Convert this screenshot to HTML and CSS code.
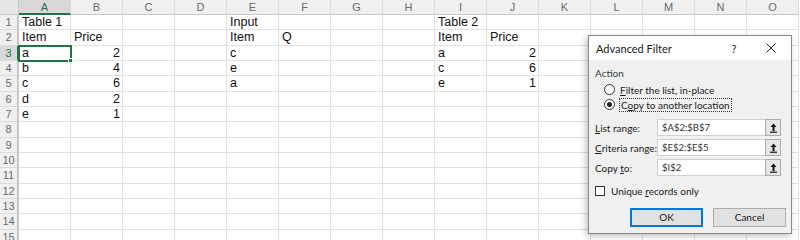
FILE: index.html
```html
<!DOCTYPE html>
<html>
<head>
<meta charset="utf-8">
<link rel="stylesheet" href="styles.css">
</head>
<body>
<div class="sheet">
  <div class="corner"></div><div class="ch sel">A</div><div class="ch">B</div><div class="ch">C</div><div class="ch">D</div><div class="ch">E</div><div class="ch">F</div><div class="ch">G</div><div class="ch">H</div><div class="ch">I</div><div class="ch">J</div><div class="ch">K</div><div class="ch">L</div><div class="ch">M</div><div class="ch">N</div><div class="ch">O</div>

  <div class="rh">1</div><div class="c">Table 1</div><div class="c"></div><div class="c"></div><div class="c"></div><div class="c">Input</div><div class="c"></div><div class="c"></div><div class="c"></div><div class="c">Table 2</div><div class="c"></div><div class="c"></div><div class="c"></div><div class="c"></div><div class="c"></div><div class="c"></div>

  <div class="rh">2</div><div class="c">Item</div><div class="c">Price</div><div class="c"></div><div class="c"></div><div class="c">Item</div><div class="c">Q</div><div class="c"></div><div class="c"></div><div class="c">Item</div><div class="c">Price</div><div class="c"></div><div class="c"></div><div class="c"></div><div class="c"></div><div class="c"></div>

  <div class="rh sel">3</div><div class="c active">a<span class="handle"></span></div><div class="c n">2</div><div class="c"></div><div class="c"></div><div class="c">c</div><div class="c"></div><div class="c"></div><div class="c"></div><div class="c">a</div><div class="c n">2</div><div class="c"></div><div class="c"></div><div class="c"></div><div class="c"></div><div class="c"></div>

  <div class="rh">4</div><div class="c">b</div><div class="c n">4</div><div class="c"></div><div class="c"></div><div class="c">e</div><div class="c"></div><div class="c"></div><div class="c"></div><div class="c">c</div><div class="c n">6</div><div class="c"></div><div class="c"></div><div class="c"></div><div class="c"></div><div class="c"></div>

  <div class="rh">5</div><div class="c">c</div><div class="c n">6</div><div class="c"></div><div class="c"></div><div class="c">a</div><div class="c"></div><div class="c"></div><div class="c"></div><div class="c">e</div><div class="c n">1</div><div class="c"></div><div class="c"></div><div class="c"></div><div class="c"></div><div class="c"></div>

  <div class="rh">6</div><div class="c">d</div><div class="c n">2</div><div class="c"></div><div class="c"></div><div class="c"></div><div class="c"></div><div class="c"></div><div class="c"></div><div class="c"></div><div class="c"></div><div class="c"></div><div class="c"></div><div class="c"></div><div class="c"></div><div class="c"></div>

  <div class="rh">7</div><div class="c">e</div><div class="c n">1</div><div class="c"></div><div class="c"></div><div class="c"></div><div class="c"></div><div class="c"></div><div class="c"></div><div class="c"></div><div class="c"></div><div class="c"></div><div class="c"></div><div class="c"></div><div class="c"></div><div class="c"></div>

  <div class="rh">8</div><div class="c"></div><div class="c"></div><div class="c"></div><div class="c"></div><div class="c"></div><div class="c"></div><div class="c"></div><div class="c"></div><div class="c"></div><div class="c"></div><div class="c"></div><div class="c"></div><div class="c"></div><div class="c"></div><div class="c"></div>

  <div class="rh">9</div><div class="c"></div><div class="c"></div><div class="c"></div><div class="c"></div><div class="c"></div><div class="c"></div><div class="c"></div><div class="c"></div><div class="c"></div><div class="c"></div><div class="c"></div><div class="c"></div><div class="c"></div><div class="c"></div><div class="c"></div>

  <div class="rh">10</div><div class="c"></div><div class="c"></div><div class="c"></div><div class="c"></div><div class="c"></div><div class="c"></div><div class="c"></div><div class="c"></div><div class="c"></div><div class="c"></div><div class="c"></div><div class="c"></div><div class="c"></div><div class="c"></div><div class="c"></div>

  <div class="rh">11</div><div class="c"></div><div class="c"></div><div class="c"></div><div class="c"></div><div class="c"></div><div class="c"></div><div class="c"></div><div class="c"></div><div class="c"></div><div class="c"></div><div class="c"></div><div class="c"></div><div class="c"></div><div class="c"></div><div class="c"></div>

  <div class="rh">12</div><div class="c"></div><div class="c"></div><div class="c"></div><div class="c"></div><div class="c"></div><div class="c"></div><div class="c"></div><div class="c"></div><div class="c"></div><div class="c"></div><div class="c"></div><div class="c"></div><div class="c"></div><div class="c"></div><div class="c"></div>

  <div class="rh">13</div><div class="c"></div><div class="c"></div><div class="c"></div><div class="c"></div><div class="c"></div><div class="c"></div><div class="c"></div><div class="c"></div><div class="c"></div><div class="c"></div><div class="c"></div><div class="c"></div><div class="c"></div><div class="c"></div><div class="c"></div>

  <div class="rh">14</div><div class="c"></div><div class="c"></div><div class="c"></div><div class="c"></div><div class="c"></div><div class="c"></div><div class="c"></div><div class="c"></div><div class="c"></div><div class="c"></div><div class="c"></div><div class="c"></div><div class="c"></div><div class="c"></div><div class="c"></div>

  <div class="rh">15</div><div class="c"></div><div class="c"></div><div class="c"></div><div class="c"></div><div class="c"></div><div class="c"></div><div class="c"></div><div class="c"></div><div class="c"></div><div class="c"></div><div class="c"></div><div class="c"></div><div class="c"></div><div class="c"></div><div class="c"></div>
</div>

<div class="dialog">
  <div class="titlebar">
    <span class="title">Advanced Filter</span>
    <span class="help">?</span>
    <span class="close"><svg width="10" height="10" viewBox="0 0 10 10"><path d="M0.5 0.5L9.5 9.5M9.5 0.5L0.5 9.5" stroke="#222" stroke-width="1"/></svg></span>
  </div>
  <div class="body">
    <div class="group">Action</div>
    <div class="radio-row">
      <span class="radio"></span><span class="rlabel"><u>F</u>ilter the list, in-place</span>
    </div>
    <div class="radio-row">
      <span class="radio on"></span><span class="rlabel focus">C<u>o</u>py to another location</span>
    </div>
    <div class="field">
      <span class="flabel"><u>L</u>ist range:</span>
      <span class="input">$A$2:$B$7</span>
      <span class="pick"><svg width="7" height="10" viewBox="0 0 7 10"><path d="M3.5 0.5L6.5 4H4.5V8H2.5V4H0.5Z" fill="#111"/><rect x="0" y="8.6" width="7" height="1.2" fill="#111"/></svg></span>
    </div>
    <div class="field">
      <span class="flabel"><u>C</u>riteria range:</span>
      <span class="input">$E$2:$E$5</span>
      <span class="pick"><svg width="7" height="10" viewBox="0 0 7 10"><path d="M3.5 0.5L6.5 4H4.5V8H2.5V4H0.5Z" fill="#111"/><rect x="0" y="8.6" width="7" height="1.2" fill="#111"/></svg></span>
    </div>
    <div class="field">
      <span class="flabel">Copy <u>t</u>o:</span>
      <span class="input">$I$2</span>
      <span class="pick"><svg width="7" height="10" viewBox="0 0 7 10"><path d="M3.5 0.5L6.5 4H4.5V8H2.5V4H0.5Z" fill="#111"/><rect x="0" y="8.6" width="7" height="1.2" fill="#111"/></svg></span>
    </div>
    <div class="check-row">
      <span class="check"></span><span class="clabel">Unique <u>r</u>ecords only</span>
    </div>
    <div class="buttons">
      <span class="btn default">OK</span>
      <span class="btn">Cancel</span>
    </div>
  </div>
</div>
</body>
</html>
```

FILE: styles.css
```css
html, body {
  margin: 0;
  padding: 0;
  background: #ffffff;
  overflow: hidden;
}
body {
  width: 800px;
  height: 240px;
  position: relative;
  font-family: "Liberation Sans", Arial, sans-serif;
}
.sheet {
  display: grid;
  grid-template-columns: 19px repeat(15, 52px);
  grid-template-rows: 15px repeat(15, 15.33px);
  width: 800px;
}
.corner {
  background: #e6e6e6;
  border-right: 1px solid #c8c8c8;
  border-bottom: 1px solid #c8c8c8;
  box-sizing: border-box;
}
.ch {
  background: #f0f0f0;
  color: #6a6a6a;
  font-size: 11px;
  line-height: 14px;
  text-align: center;
  border-right: 1px solid #dcdcdc;
  border-bottom: 1px solid #c8c8c8;
  box-sizing: border-box;
}
.ch.sel {
  background: #d9d9d9;
  color: #217346;
  border-bottom: 2px solid #217346;
}
.rh {
  background: #f0f0f0;
  color: #6a6a6a;
  font-size: 11px;
  line-height: 15px;
  text-align: center;
  border-right: 2px solid #c8c8c8;
  border-bottom: 1px solid #dcdcdc;
  box-sizing: border-box;
}
.rh.sel {
  background: #d9d9d9;
  color: #217346;
  border-right: 2px solid #217346;
}
.c {
  font-size: 12.5px;
  line-height: 15px;
  color: #111;
  padding: 0 3px;
  border-right: 1px solid #e1e1e1;
  border-bottom: 1px solid #e1e1e1;
  box-sizing: border-box;
  white-space: nowrap;
  overflow: visible;
  position: relative;
}
.c.n {
  text-align: right;
  padding-right: 2px;
}
.c.active {
  outline: 2px solid #217346;
  outline-offset: -1px;
  z-index: 2;
}
.handle {
  position: absolute;
  right: -3px;
  bottom: -3px;
  width: 5px;
  height: 5px;
  background: #217346;
  border: 1px solid #fff;
  box-sizing: border-box;
}

/* dialog */
.dialog {
  position: absolute;
  left: 588px;
  top: 35px;
  width: 204px;
  height: 199px;
  box-sizing: border-box;
  border: 1px solid #8a8a8a;
  background: #f0f0f0;
  box-shadow: -2px 2px 6px rgba(0,0,0,0.25);
  font-family: Lato, "Open Sans", sans-serif;
  font-size: 10px;
  color: #1a1a1a;
  z-index: 10;
  white-space: nowrap;
}
.titlebar {
  height: 24px;
  background: #ffffff;
  display: flex;
  align-items: center;
  padding-left: 7px;
}
.title {
  font-size: 11px;
  flex: 1;
}
.help {
  font-size: 11px;
  width: 20px;
  margin-right: 22px;
  text-align: center;
}
.close {
  width: 12px;
  margin-right: 13px;
  display: flex;
  align-items: center;
}
.body {
  padding: 5px 5px 0 6px;
}
.group {
  color: #3c3c3c;
  height: 16px;
  line-height: 16px;
  margin-bottom: 1px;
}
.radio-row {
  display: flex;
  align-items: center;
  height: 15px;
  padding-left: 9px;
}
.radio {
  width: 9px;
  height: 9px;
  border: 1px solid #333;
  border-radius: 50%;
  background: #fff;
  margin-right: 4px;
  position: relative;
  flex: none;
}
.radio.on::after {
  content: "";
  position: absolute;
  left: 2px;
  top: 2px;
  width: 5px;
  height: 5px;
  border-radius: 50%;
  background: #222;
}
.rlabel {
  line-height: 12px;
  padding: 0 1px;
}
.rlabel.focus {
  border: 1px dotted #333;
}
.field {
  display: flex;
  align-items: center;
  height: 17px;
  margin-top: 3px;
}
.radio-row + .field {
  margin-top: 7px;
}
.flabel {
  width: 62px;
  flex: none;
}
.input {
  width: 108px;
  height: 17px;
  box-sizing: border-box;
  background: #fff;
  border: 1px solid #d0d0d0;
  border-right: none;
  padding-left: 4px;
  line-height: 15px;
  font-size: 9.5px;
  color: #333;
}
.pick {
  width: 16px;
  height: 17px;
  box-sizing: border-box;
  background: #e6e6e6;
  border: 1px solid #adadad;
  display: flex;
  align-items: center;
  justify-content: center;
}
.check-row {
  display: flex;
  align-items: center;
  margin-top: 9px;
  height: 12px;
}
.check {
  width: 10px;
  height: 10px;
  box-sizing: border-box;
  border: 1px solid #333;
  background: #fff;
  margin-right: 6px;
}
.buttons {
  display: flex;
  justify-content: flex-end;
  gap: 10px;
  margin-top: 11px;
  padding-right: 0;
}
.btn {
  width: 73px;
  height: 19px;
  box-sizing: border-box;
  background: #e1e1e1;
  border: 1px solid #adadad;
  text-align: center;
  line-height: 17px;
  font-size: 10px;
}
.btn.default {
  border: 2px solid #0078d7;
  line-height: 15px;
}
```
